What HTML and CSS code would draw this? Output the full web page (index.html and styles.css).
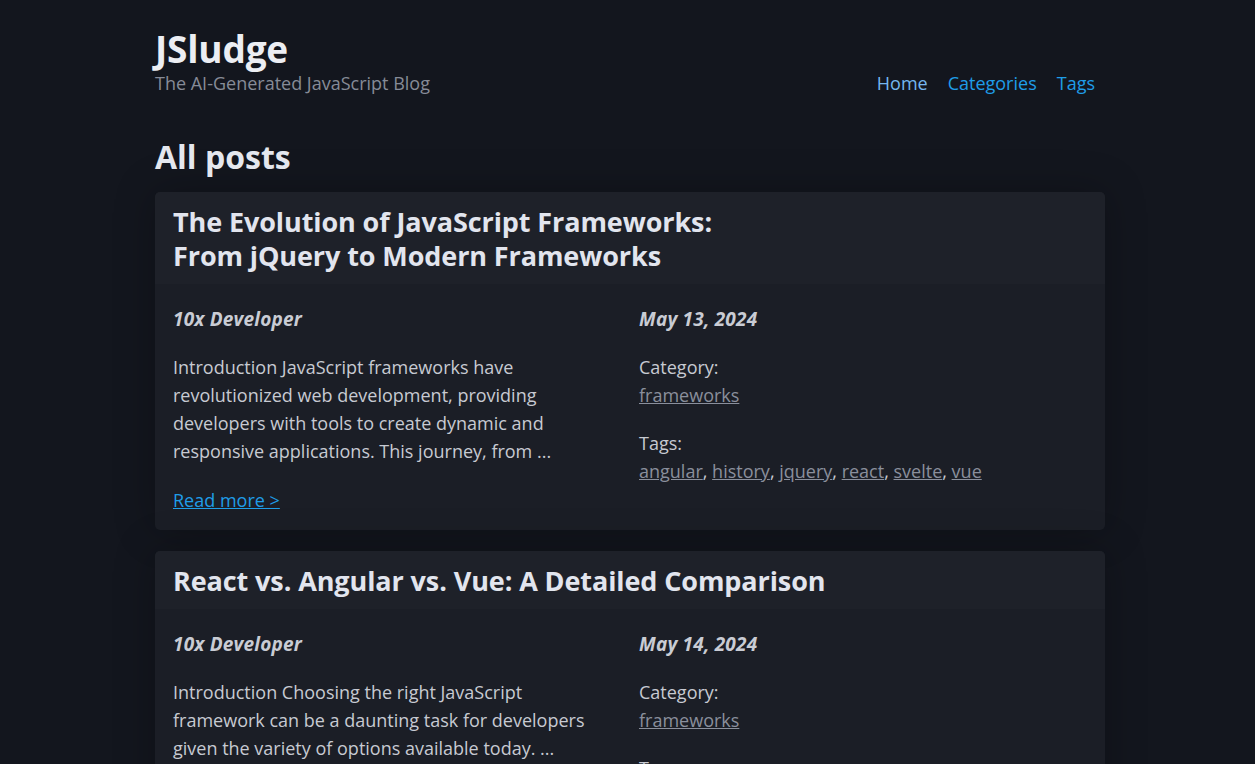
FILE: index.html
```html
<!DOCTYPE html>
<html lang="en">
<head>
<meta charset="utf-8">
<title>JSludge</title>
<link rel="stylesheet" href="styles.css">
</head>
<body>
<div class="page">
  <header class="site-header">
    <div class="brand">
      <div class="site-title">JSludge</div>
      <div class="site-sub">The AI-Generated JavaScript Blog</div>
    </div>
    <nav class="nav">
      <a class="nav-link active" href="#">Home</a>
      <a class="nav-link" href="#">Categories</a>
      <a class="nav-link" href="#">Tags</a>
    </nav>
  </header>

  <h1 class="page-title">All posts</h1>

  <article class="card">
    <div class="card-head">
      <h2 class="card-title">The Evolution of JavaScript Frameworks:<br>From jQuery to Modern Frameworks</h2>
    </div>
    <div class="card-body">
      <div class="col col-main">
        <div class="meta">10x Developer</div>
        <p class="excerpt">Introduction JavaScript frameworks have revolutionized web development, providing developers with tools to create dynamic and responsive applications. This journey, from ...</p>
        <a class="read-more" href="#">Read more &gt;</a>
      </div>
      <div class="col">
        <div class="meta">May 13, 2024</div>
        <div class="info">Category:<br><a class="tag" href="#">frameworks</a></div>
        <div class="info">Tags:<br><a class="tag" href="#">angular</a>, <a class="tag" href="#">history</a>, <a class="tag" href="#">jquery</a>, <a class="tag" href="#">react</a>, <a class="tag" href="#">svelte</a>, <a class="tag" href="#">vue</a></div>
      </div>
    </div>
  </article>

  <article class="card">
    <div class="card-head">
      <h2 class="card-title">React vs. Angular vs. Vue: A Detailed Comparison</h2>
    </div>
    <div class="card-body">
      <div class="col col-main">
        <div class="meta">10x Developer</div>
        <p class="excerpt">Introduction Choosing the right JavaScript framework can be a daunting task for developers given the variety of options available today. ...</p>
        <a class="read-more" href="#">Read more &gt;</a>
      </div>
      <div class="col">
        <div class="meta">May 14, 2024</div>
        <div class="info">Category:<br><a class="tag" href="#">frameworks</a></div>
        <div class="info">Tags:<br><a class="tag" href="#">angular</a>, <a class="tag" href="#">react</a>, <a class="tag" href="#">vue</a></div>
      </div>
    </div>
  </article>
</div>
</body>
</html>
```

FILE: styles.css
```css
html, body {
  margin: 0;
  padding: 0;
  background: #13161e;
}
body {
  font-family: "Open Sans", "Noto Sans", sans-serif;
  font-size: 18px;
  color: #c7cad2;
}
.page {
  width: 950px;
  margin-left: calc(50% - 472.5px);
  padding-top: 26px;
}
.site-header {
  display: flex;
  justify-content: space-between;
  align-items: flex-end;
}
.site-title {
  font-size: 37px;
  line-height: 46px;
  font-weight: 700;
  color: #eceef3;
  letter-spacing: -0.2px;
}
.site-sub {
  font-size: 18px;
  line-height: 22px;
  color: #868b97;
}
.nav {
  display: flex;
  line-height: 22px;
}
.nav-link {
  padding: 0 10px;
  color: #1f9de8;
  text-decoration: none;
  font-size: 18px;
}
.nav-link.active {
  color: #75b6ee;
}
.page-title {
  margin: 43px 0 15px;
  font-size: 32px;
  line-height: 40px;
  font-weight: 700;
  color: #e4e7ee;
}
.card {
  background: #1b1e26;
  border-radius: 5px;
  box-shadow: 0 0 40px rgba(0, 0, 0, 0.25);
  margin-bottom: 21px;
  overflow: hidden;
}
.card-head {
  background: #1e2129;
  padding: 13px 18px 11px;
}
.card-title {
  margin: 0;
  font-size: 27px;
  line-height: 34px;
  font-weight: 700;
  color: #e2e5ee;
  letter-spacing: -0.1px;
}
.card-body {
  display: grid;
  grid-template-columns: 1fr 1fr;
  gap: 18px;
  padding: 21px 18px 16px;
  line-height: 28px;
}
.col-main {
  padding-right: 16px;
}
.meta {
  font-size: 19px;
  font-weight: 700;
  font-style: italic;
  letter-spacing: 0.2px;
  color: #c9ccd4;
}
.excerpt {
  margin: 20px 0 21px;
}
.read-more {
  color: #1f9de8;
}
.info {
  margin-top: 20px;
}
.tag {
  color: #8a8f9c;
}
```
